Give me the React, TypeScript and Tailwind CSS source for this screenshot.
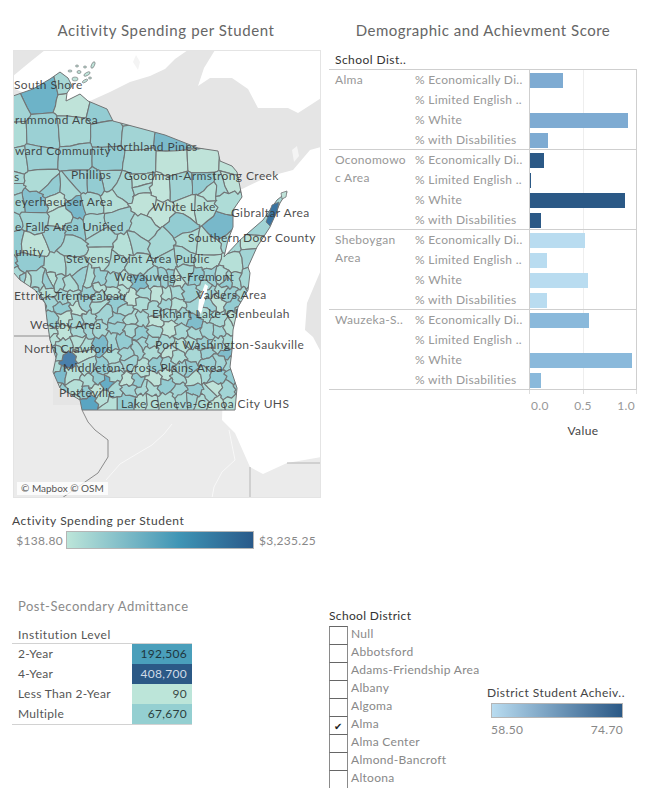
type P = [number, number];

const STATE: P[] = [
  [13, 96], [33, 89], [50, 79], [60, 72], [68, 78], [72, 86], [67, 93], [66, 101], [80, 94], [88, 101],
  [107, 109], [113, 121], [143, 129], [165, 135], [198, 148], [218, 151], [220, 161], [232, 166], [237, 172],
  [242, 197], [233, 210], [233, 227], [228, 240], [224, 257], [240, 240], [263, 220], [277, 200], [287, 192],
  [280, 203], [270, 227], [257, 247], [248, 267], [250, 273], [248, 290], [238, 307], [233, 330], [232, 350],
  [230, 367], [237, 388], [235, 410], [82, 410], [80, 400], [60, 388], [53, 372], [56, 358], [50, 340],
  [47, 320], [45, 303], [35, 290], [20, 280], [13, 272],
];

const PALETTE = ["#bfe3d9", "#b6e0d8", "#aedcd7", "#a8d8d6", "#a8d8d6", "#a2d4d5", "#9bd0d4", "#93ccd2"];

const ACCENTS: { p: P; c: string }[] = [
  { p: [40, 92], c: "#6db3c8" },
  { p: [75, 102], c: "#bfe3d9" },
  { p: [172, 140], c: "#7bbacb" },
  { p: [77, 207], c: "#78b8ca" },
  { p: [36, 203], c: "#86c1ce" },
  { p: [160, 190], c: "#c2e5db" },
  { p: [160, 212], c: "#c2e5db" },
  { p: [223, 227], c: "#78b8ca" },
  { p: [132, 298], c: "#c0e3d9" },
  { p: [68, 361], c: "#4a80ac" },
  { p: [107, 385], c: "#66adc6" },
  { p: [88, 402], c: "#5aa5c2" },
  { p: [102, 345], c: "#7bbacb" },
  { p: [60, 376], c: "#7bbacb" },
  { p: [140, 284], c: "#80bdcc" },
  { p: [195, 322], c: "#80bdcc" },
  { p: [226, 354], c: "#80bdcc" },
];

// half-plane clip, keeps the side of the polygon nearest to a
function clip(poly: P[], a: P, b: P): P[] {
  const mx = (a[0] + b[0]) / 2;
  const my = (a[1] + b[1]) / 2;
  const nx = b[0] - a[0];
  const ny = b[1] - a[1];
  const side = (p: P) => (p[0] - mx) * nx + (p[1] - my) * ny;
  const out: P[] = [];
  poly.forEach((p, i) => {
    const q = poly[(i + 1) % poly.length];
    const sp = side(p);
    const sq = side(q);
    if (sp <= 0) out.push(p);
    if (sp < 0 !== sq < 0) {
      const t = sp / (sp - sq);
      out.push([p[0] + (q[0] - p[0]) * t, p[1] + (q[1] - p[1]) * t]);
    }
  });
  return out;
}

// same offset for the same spot, so neighbouring districts keep a shared edge
function wobble(x: number, y: number): string {
  const a = y < 185 ? 0.5 : 1.5;
  const wx = x + a * Math.sin(y * 0.83 + x * 0.37);
  const wy = y + a * Math.sin(x * 0.79 - y * 0.41);
  return wx.toFixed(1) + "," + wy.toFixed(1);
}

function buildCells() {
  let s = 12345;
  const rnd = () => {
    s = (s * 1664525 + 1013904223) % 4294967296;
    return s / 4294967296;
  };
  const seeds: { p: P; c: string }[] = [...ACCENTS];
  const bands = [
    { y0: 84, y1: 186, dx: 32, dy: 25, j: 0.3 },
    { y0: 186, y1: 282, dx: 22, dy: 19, j: 0.7 },
    { y0: 282, y1: 412, dx: 13, dy: 12, j: 0.75 },
  ];
  bands.forEach((b) => {
    for (let y = b.y0; y < b.y1; y += b.dy) {
      for (let x = 10; x < 260; x += b.dx) {
        const p: P = [x + (rnd() - 0.5) * b.dx * b.j, y + (rnd() - 0.5) * b.dy * b.j];
        const c = PALETTE[Math.floor(rnd() * PALETTE.length)];
        if (!ACCENTS.some((a) => Math.hypot(a.p[0] - p[0], a.p[1] - p[1]) < b.dy * 0.7)) seeds.push({ p, c });
      }
    }
  });
  return seeds.map((seed) => {
    let poly: P[] = [[0, 50], [330, 50], [330, 430], [0, 430]];
    seeds.forEach((o) => {
      if (o !== seed && Math.hypot(o.p[0] - seed.p[0], o.p[1] - seed.p[1]) < 90) poly = clip(poly, seed.p, o.p);
    });
    const pts: string[] = [];
    poly.forEach((p, i) => {
      const q = poly[(i + 1) % poly.length];
      pts.push(wobble(p[0], p[1]));
      pts.push(wobble(p[0] + (q[0] - p[0]) / 3, p[1] + (q[1] - p[1]) / 3));
      pts.push(wobble(p[0] + ((q[0] - p[0]) * 2) / 3, p[1] + ((q[1] - p[1]) * 2) / 3));
    });
    return { d: pts.join(" "), c: seed.c };
  });
}

const CELLS = buildCells();

const LABELS: { t: string; x: number; y: number }[] = [
  { t: "South Shore", x: 14, y: 89 },
  { t: "rummond Area", x: 15, y: 124 },
  { t: "ward Community", x: 15, y: 155 },
  { t: "Northland Pines", x: 107, y: 151 },
  { t: "Phillips", x: 71, y: 179 },
  { t: "s", x: 14, y: 181 },
  { t: "Goodman-Armstrong Creek", x: 124, y: 180 },
  { t: "eyerhaeuser Area", x: 15, y: 206 },
  { t: "White Lake", x: 152, y: 211 },
  { t: "Gibraltar Area", x: 231, y: 217 },
  { t: "e Falls Area Unified", x: 15, y: 231 },
  { t: "Southern Door County", x: 188, y: 242 },
  { t: "unity", x: 15, y: 256 },
  { t: "Stevens Point Area Public", x: 66, y: 263 },
  { t: "Weyauwega-Fremont", x: 114, y: 281 },
  { t: "Ettrick-Trempealeau", x: 14, y: 300 },
  { t: "Valders Area", x: 196, y: 299 },
  { t: "Elkhart Lake-Glenbeulah", x: 152, y: 318 },
  { t: "Westby Area", x: 30, y: 329 },
  { t: "Port Washington-Saukville", x: 155, y: 349 },
  { t: "North Crawford", x: 24, y: 353 },
  { t: "Middleton-Cross Plains Area", x: 63, y: 372 },
  { t: "Platteville", x: 59, y: 397 },
  { t: "Lake Geneva-Genoa City UHS", x: 121, y: 408 },
];

function WisconsinMap() {
  const outline = STATE.map((p) => p.join(",")).join(" ");
  return (
    <svg viewBox="14 51 306 446" className="block h-[446px] w-[306px]">
      <defs>
        <clipPath id="wi">
          <polygon points={outline} />
        </clipPath>
      </defs>
      <rect x="13" y="50" width="308" height="448" fill="#e5e5e5" />
      <rect x="13" y="405" width="308" height="93" fill="#ebebeb" />
      <rect x="13" y="270" width="40" height="135" fill="#ebebeb" />
      {/* Lake Superior */}
      <polygon
        fill="#fff"
        points="45,50 188,50 175,59 165,69 150,76 130,82 110,92 90,101 72,110 40,100 13,88 13,76 30,62"
      />
      <polygon
        fill="#fff"
        points="215,50 321,50 321,98 312,104 298,113 288,108 270,108 258,108 248,89 232,78 210,78 198,86 204,68"
      />
      {/* Lake Michigan */}
      <polygon
        fill="#fff"
        points="321,147 310,150 293,170 267,177 240,190 225,250 226,300 222,420 235,433 250,467 263,474 287,463 321,457 321,352 313,337 305,330 307,303 321,270"
      />
      <polygon fill="#f4f4f4" points="136,55 140,62 138,70 133,62" />
      <polygon fill="#f4f4f4" points="292,150 297,146 299,156 294,162" />
      <polyline fill="none" stroke="#f8f8f8" strokeWidth="1" points="172,424 164,434 152,445 140,452 120,464 106,480" />
      <polyline fill="none" stroke="#f8f8f8" strokeWidth="1" points="229,430 232,445 235,460 222,472 214,487 212,498" />
      {/* state borders */}
      <polyline
        fill="none"
        stroke="#8b8b8b"
        strokeWidth="1"
        points="82,410 88,422 95,430 108,440 108,457 98,473 85,482 62,498"
      />
      <line x1="13" y1="336" x2="50" y2="336" stroke="#8b8b8b" />
      <line x1="250" y1="467" x2="250" y2="498" stroke="#b5b5b5" />
      <line x1="287" y1="463" x2="321" y2="463" stroke="#b5b5b5" />
      <g clipPath="url(#wi)">
        <polygon points={outline} fill="#a8d8d6" />
        {CELLS.map((c, i) => (
          <polygon key={i} points={c.d} fill={c.c} stroke="#727576" strokeWidth="1.1" strokeLinejoin="round" />
        ))}
      </g>
      <polygon points={outline} fill="none" stroke="#727576" strokeWidth="1" />
      <polygon points="266,222 272,205 279,202 277,212 270,226" fill="#3a74a0" stroke="#727576" strokeWidth="0.8" />
      <polygon points="281,193 287,191 286,197 282,199" fill="#bfe3d9" stroke="#727576" strokeWidth="0.8" />
      {/* Apostle islands */}
      <g fill="#bfe3d9" stroke="#7d8283" strokeWidth="0.7">
        <ellipse cx="93" cy="65" rx="1.5" ry="3.5" transform="rotate(25 93 65)" />
        <ellipse cx="85" cy="67" rx="1.5" ry="1" />
        <ellipse cx="77" cy="66" rx="1.5" ry="1" />
        <ellipse cx="70" cy="71" rx="2" ry="1" />
        <ellipse cx="87" cy="74" rx="3.5" ry="1.5" transform="rotate(-30 87 74)" />
        <ellipse cx="79" cy="72" rx="2" ry="1.5" />
        <ellipse cx="75" cy="79" rx="3" ry="2" />
        <ellipse cx="85" cy="81" rx="3" ry="1.2" transform="rotate(-30 85 81)" />
        <ellipse cx="90" cy="78" rx="1.5" ry="1" />
      </g>
      <polygon points="205,284 199,300 198,310 201,314 205,300 208,286" fill="#fff" />
      {LABELS.map((l) => (
        <text key={l.t} x={l.x} y={l.y} fontSize="12" fill="#333" fillOpacity="0.88" letterSpacing="0.4">
          {l.t}
        </text>
      ))}
    </svg>
  );
}

const ROW_LABELS = ["% Economically Di..", "% Limited English ..", "% White", "% with Disabilities"];

const DISTRICTS = [
  { name: ["Alma"], color: "#7eabd2", values: [33, 0, 98, 18] },
  { name: ["Oconomowo", "c Area"], color: "#2b5986", values: [14, 1, 95, 11] },
  { name: ["Sheboygan", "Area"], color: "#b9dcf0", values: [55, 17, 58, 17] },
  { name: ["Wauzeka-S.."], color: "#8ab9db", values: [59, 0, 102, 11] },
];

function BarTable() {
  return (
    <div className="w-[308px] border-b-[1.5px] border-[#cfcfcf]">
      {DISTRICTS.map((d) => (
        <div key={d.name[0]} className="flex h-20 border-t-[1.5px] border-[#cfcfcf]">
          <div className="w-[86px] pl-[6px] pt-px text-xs leading-[18px] tracking-[0.3px] text-[#989898]">
            {d.name.map((n) => (
              <div key={n}>{n}</div>
            ))}
          </div>
          <div className="w-[114px]">
            {ROW_LABELS.map((l) => (
              <div key={l} className="flex h-5 items-center whitespace-nowrap text-xs tracking-[0.3px] text-[#989898]">
                {l}
              </div>
            ))}
          </div>
          <div className="relative flex-1 border-x-[1.5px] border-l-[#cfcfcf] border-r-[#cfcfcf]">
            <div className="absolute inset-y-0 left-[53px] w-px bg-[#eeeeee]" />
            {d.values.map((v, i) => (
              <div key={i} className="relative flex h-5 items-center">
                <div className="h-[15px]" style={{ width: v, backgroundColor: d.color }} />
              </div>
            ))}
          </div>
        </div>
      ))}
    </div>
  );
}

const FILTER_ITEMS = ["Null", "Abbotsford", "Adams-Friendship Area", "Albany", "Algoma", "Alma", "Alma Center", "Almond-Bancroft", "Altoona"];

const LEVELS = [
  { name: "2-Year", value: "192,506", bg: "bg-[#4a9fbb]", fg: "text-[#1f3640]" },
  { name: "4-Year", value: "408,700", bg: "bg-[#2b5986]", fg: "text-[#d0dbe6]" },
  { name: "Less Than 2-Year", value: "90", bg: "bg-[#bce5d9]", fg: "text-[#3a4a46]" },
  { name: "Multiple", value: "67,670", bg: "bg-[#94cfd1]", fg: "text-[#2c3f40]" },
];

export default function App() {
  return (
    <div className="h-[798px] w-[649px] overflow-hidden bg-white font-[Lato,sans-serif]">
      <div className="flex h-[590px]">
        <div className="w-[325px] pt-5">
          <h2 className="ml-[6px] h-5 w-[320px] text-center text-[15px] font-normal leading-5 tracking-[0.6px] text-[#666]">
            Acitivity Spending per Student
          </h2>
          <div className="relative ml-[13px] mt-[10px] h-[448px] w-[308px] border border-[#e4e4e4]">
            <WisconsinMap />
            <div className="absolute bottom-[2px] left-[3px] bg-white/80 px-1 text-[10px] leading-[13px] text-[#555]">
              © Mapbox © OSM
            </div>
          </div>
          <div className="ml-3 mt-[15px] h-4 text-xs leading-4 tracking-[0.55px] text-[#444]">
            Activity Spending per Student
          </div>
          <div className="ml-1 mt-[2px] flex h-[18px] items-center">
            <span className="w-[59px] pt-px text-right text-xs tracking-[0.3px] text-[#888]">$138.80</span>
            <div className="ml-[3px] h-[18px] w-[188px] border-[1.5px] border-[#b5b5b5] bg-linear-to-r from-[#bce5d9] via-[#3f95b5] via-60% to-[#2a5a8a]" />
            <span className="ml-[5px] whitespace-nowrap pt-px text-xs tracking-[0.3px] text-[#888]">$3,235.25</span>
          </div>
        </div>
        <div className="flex-1 pl-1 pt-5">
          <h2 className="ml-[-8px] h-5 w-[324px] text-center text-[15px] font-normal leading-5 tracking-[0.5px] text-[#666]">
            Demographic and Achievment Score
          </h2>
          <div className="ml-[6px] mt-[12px] h-[17px] text-xs leading-4 tracking-[0.45px] text-[#333]">School Dist..</div>
          <BarTable />
          <div className="ml-[200px] w-[108px]">
            <div className="flex h-[4px] justify-between">
              <span className="w-px bg-[#dddddd]" />
              <span className="w-px bg-[#dddddd]" />
              <span className="w-px bg-[#dddddd]" />
            </div>
            <div className="mt-[4px] flex justify-between px-[2px] text-xs leading-4 tracking-[0.3px] text-[#989898]">
              <span>0.0</span>
              <span>0.5</span>
              <span>1.0</span>
            </div>
            <div className="mt-[9px] text-center text-xs leading-4 tracking-[0.4px] text-[#444]">Value</div>
          </div>
        </div>
      </div>
      <div className="flex">
        <div className="w-[325px] pt-2">
          <h3 className="ml-[18px] h-4 text-[13px] font-normal leading-4 tracking-[0.5px] text-[#8a8a8a]">Post-Secondary Admittance</h3>
          <div className="ml-3 mt-[13px] w-[180px]">
            <div className="h-[17px] border-b-[1.5px] border-[#d2d2d2] pl-[6px] text-xs leading-4 tracking-[0.5px] text-[#555]">Institution Level</div>
            {LEVELS.map((l) => (
              <div key={l.name} className="flex h-5 items-center text-xs tracking-[0.3px] text-[#555]">
                <div className="w-[120px] pl-[6px]">{l.name}</div>
                <div className={`flex h-5 w-[60px] items-center justify-end pr-[5px] ${l.bg} ${l.fg}`}>{l.value}</div>
              </div>
            ))}
            <div className="border-t-[1.5px] border-[#d2d2d2]" />
          </div>
        </div>
        <div className="w-[162px] pl-1 pt-[18px]">
          <div className="h-4 whitespace-nowrap text-xs leading-4 tracking-[0.35px] text-[#333]">School District</div>
          <div className="mt-[2px]">
            {FILTER_ITEMS.map((name) => (
              <div key={name} className="flex h-[18px] items-center whitespace-nowrap text-xs tracking-[0.3px] text-[#888]">
                <div className="flex h-[18px] w-[19px] items-center justify-center border-x-[1.5px] border-t-[1.5px] border-x-[#8a8a8a] border-t-[#666] text-[10px] leading-none text-[#222]">
                  {name === "Alma" ? "✔" : ""}
                </div>
                <span className="mb-[2px] ml-[3px]">{name}</span>
              </div>
            ))}
          </div>
        </div>
        <div className="pt-[95px]">
          <div className="h-4 whitespace-nowrap text-xs leading-4 tracking-[0.45px] text-[#444]">District Student Acheiv..</div>
          <div className="ml-1 mt-[2px] h-[15px] w-[132px] border-[1.5px] border-[#b5b5b5] bg-linear-to-r from-[#b9dcf0] to-[#2b5986]" />
          <div className="ml-1 mt-[4px] flex w-[132px] justify-between text-xs leading-4 tracking-[0.3px] text-[#888]">
            <span>58.50</span>
            <span>74.70</span>
          </div>
        </div>
      </div>
    </div>
  );
}
